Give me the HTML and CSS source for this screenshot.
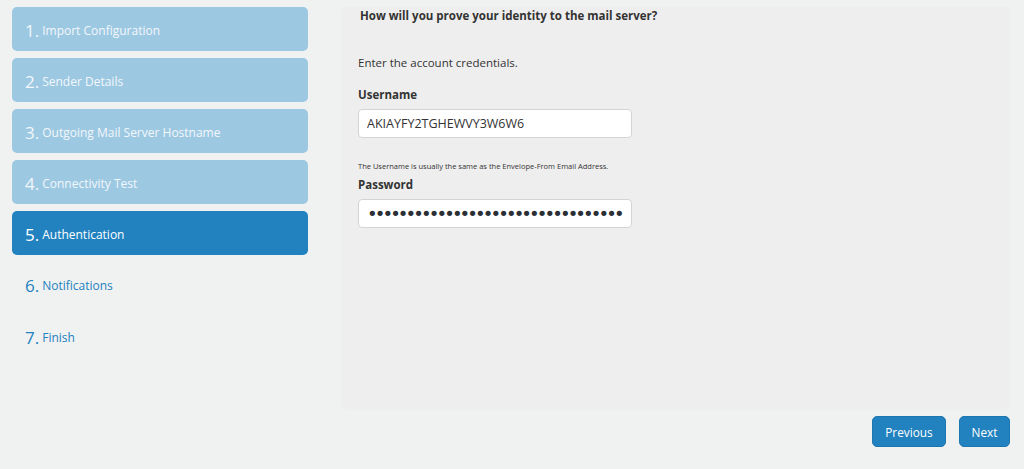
FILE: index.html
```html
<!DOCTYPE html>
<html lang="en">
  <head>
    <meta charset="UTF-8" />
    <meta name="viewport" content="width=device-width, initial-scale=1.0" />
    <title>Mail Setup Wizard</title>
    <link rel="stylesheet" href="styles.css">
  </head>
  <body>
    <div class="wizard">
      <ul class="steps">
        <li class="step done"><span class="num">1.</span> Import Configuration</li>
        <li class="step done"><span class="num">2.</span> Sender Details</li>
        <li class="step done"><span class="num">3.</span> Outgoing Mail Server Hostname</li>
        <li class="step done"><span class="num">4.</span> Connectivity Test</li>
        <li class="step current"><span class="num">5.</span> Authentication</li>
        <li class="step"><span class="num">6.</span> Notifications</li>
        <li class="step"><span class="num">7.</span> Finish</li>
      </ul>

      <div class="main">
        <div class="panel">
          <h2>How will you prove your identity to the mail server?</h2>
          <p class="intro">Enter the account credentials.</p>
          <label class="field-label">Username</label>
          <input class="field" type="text" value="AKIAYFY2TGHEWVY3W6W6" />
          <p class="hint">The Username is usually the same as the Envelope-From Email Address.</p>
          <label class="field-label">Password</label>
          <input class="field" type="password" value="abcdefghijklmnopqrstuvwxyz0123456" />
        </div>
        <div class="actions">
          <button class="btn-prev">Previous</button>
          <button class="btn-next">Next</button>
        </div>
      </div>
    </div>
  </body>
</html>
```

FILE: styles.css
```css
body {
  font-family: "Open Sans", sans-serif;
  background: #f0f1f1;
  color: #333;
  margin: 0;
}
.wizard {
  display: flex;
  gap: 33px;
  padding: 7px 14px 0 12px;
}
.steps {
  list-style: none;
  margin: 0;
  padding: 0;
  width: 296px;
  flex-shrink: 0;
}
.step {
  height: 44px;
  margin-bottom: 7px;
  padding: 2px 0 0 13px;
  border-radius: 5px;
  display: flex;
  align-items: center;
  font-size: 12px;
  color: #2382c0;
  box-sizing: border-box;
}
.step .num {
  font-size: 17px;
  font-weight: 400;
  margin-right: 3px;
}
.step.done {
  background: #9dc8e2;
  color: #f2f7fb;
}
.step.current {
  background: #2182bf;
  color: #fff;
}
.step:not(.done):not(.current) {
  height: 45px;
}
.main {
  flex: 1;
  display: flex;
  flex-direction: column;
}
.panel {
  background: #eeeeee;
  border-radius: 5px;
  height: 403px;
  padding: 0 17px;
  box-sizing: border-box;
}
.panel h2 {
  font-size: 11.5px;
  font-weight: 700;
  margin: 0;
  padding: 1px 0 0 2px;
}
.intro {
  font-size: 11.5px;
  margin: 32px 0 0;
}
.field-label {
  display: block;
  font-size: 11.5px;
  font-weight: 700;
  margin-top: 17px;
}
.field {
  display: block;
  width: 274px;
  height: 29px;
  margin-top: 7px;
  padding: 0 8px;
  box-sizing: border-box;
  border: 1px solid #d4d4d4;
  border-radius: 4px;
  background: #fff;
  font-family: "Open Sans", sans-serif;
  font-size: 12.5px;
  color: #333;
}
.field[type="password"] {
  font-family: "DejaVu Sans", sans-serif;
  font-size: 18px;
  letter-spacing: -2.9px;
  color: #2b2f36;
}
.hint {
  font-size: 7.5px;
  margin: 23px 0 0;
}
.hint + .field-label {
  margin-top: 6px;
}
.actions {
  display: flex;
  justify-content: flex-end;
  gap: 13px;
  margin-top: 6px;
}
button {
  background: #2182bf;
  color: #fff;
  border: 1px solid #1c76b0;
  border-radius: 5px;
  height: 31px;
  padding: 0 12.5px;
  font-family: "Open Sans", sans-serif;
  font-size: 11.8px;
  cursor: pointer;
}
.btn-next {
  padding: 0 11.5px;
}
```
